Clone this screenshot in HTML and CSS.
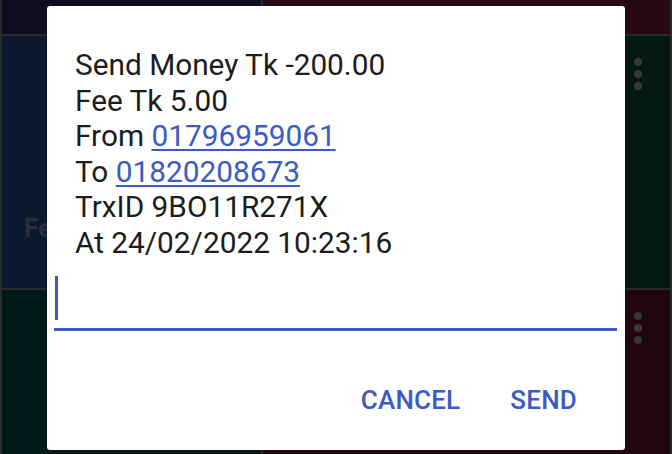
FILE: index.html
```html
<!DOCTYPE html>
<html>
<head>
<meta charset="utf-8">
<link rel="stylesheet" href="styles.css">
</head>
<body>
<div class="tiles">
  <div class="tile t1"></div>
  <div class="tile t2"></div>
  <div class="tile t3"><span class="ghost">Fees</span></div>
  <div class="tile t4"><div class="dots"><i></i><i></i><i></i></div></div>
  <div class="tile t5"></div>
  <div class="tile t6"><div class="dots"><i></i><i></i><i></i></div></div>
</div>
<div class="dialog">
  <div class="msg">
    <div>Send Money Tk -200.00</div>
    <div>Fee Tk 5.00</div>
    <div>From <a class="link">01796959061</a></div>
    <div>To <a class="link">01820208673</a></div>
    <div>TrxID 9BO11R271X</div>
    <div>At 24/02/2022 10:23:16</div>
  </div>
  <div class="input"><span class="cursor"></span></div>
  <div class="actions">
    <span class="btn">CANCEL</span>
    <span class="btn">SEND</span>
  </div>
</div>
</body>
</html>
```
FILE: styles.css
```css
html, body {
  margin: 0;
  padding: 0;
  width: 672px;
  height: 454px;
  overflow: hidden;
  background: #2a2a2a;
  font-family: Roboto, "Noto Sans", sans-serif;
}
.tiles {
  display: grid;
  grid-template-columns: 259px 407px;
  grid-template-rows: 34px 252px 164px;
  column-gap: 2px;
  row-gap: 2px;
  padding-left: 2px;
  background: #2a2a2a;
  width: 672px;
  height: 454px;
  box-sizing: border-box;
}
.tile { position: relative; }
.t1 { background: #110b1f; }
.t2 { background: #260914; }
.t3 { background: #0c1930; }
.t4 { background: #03190f; }
.t5 { background: #011818; }
.t6 { background: #21060f; }
.ghost {
  display: block;
  margin: 179px 0 0 22px;
  font-size: 26px;
  line-height: 26px;
  font-weight: 700;
  color: #2a2d3a;
}
.t4, .t6 {
  display: flex;
  justify-content: flex-end;
  align-items: flex-start;
}
.dots {
  display: flex;
  flex-direction: column;
  gap: 4px;
  padding: 22px 28px 0 0;
}
.dots i {
  display: block;
  width: 8px;
  height: 8px;
  border-radius: 50%;
  background: #383838;
}
.dialog {
  position: absolute;
  left: 47px;
  top: 6px;
  width: 578px;
  height: 444px;
  background: #ffffff;
  border-radius: 3px;
  box-sizing: border-box;
  padding-top: 41px;
}
.msg {
  padding-left: 28px;
  font-size: 29.8px;
  line-height: 35.5px;
  color: #1c1c1c;
}
.link {
  color: #3a5bc7;
  text-decoration: underline;
  text-decoration-thickness: 1.5px;
  text-underline-offset: 3px;
}
.input {
  margin: 16px 8px 0 7px;
  height: 52px;
  border-bottom: 3px solid #3a5bc7;
}
.cursor {
  display: block;
  width: 3px;
  height: 44px;
  margin: 5px 0 0 1px;
  background: #3a5bc7;
}
.actions {
  display: flex;
  justify-content: flex-end;
  gap: 50px;
  padding-right: 48px;
  margin-top: 54px;
}
.btn {
  font-size: 26px;
  line-height: 30px;
  font-weight: 500;
  letter-spacing: 0.2px;
  color: #3a5bc7;
}
```
